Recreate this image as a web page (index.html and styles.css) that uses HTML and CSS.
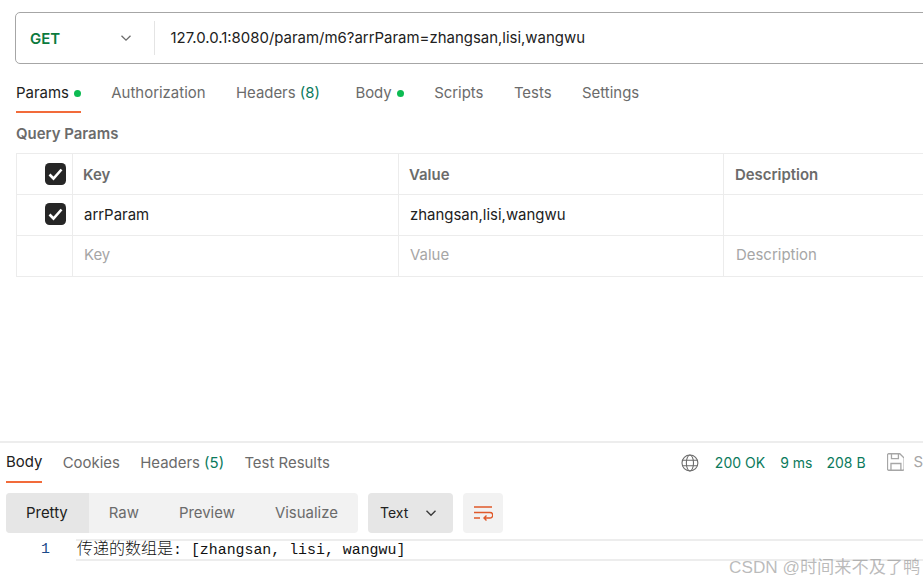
FILE: index.html
```html
<!DOCTYPE html>
<html lang="zh">
<head>
<meta charset="utf-8">
<title>Postman</title>
<link rel="stylesheet" href="styles.css">
</head>
<body>
<main class="page">
  <section class="request">
    <div class="urlbar">
      <div class="method"><span class="get">GET</span>
        <svg class="chev" width="12" height="12" viewBox="0 0 12 12"><path d="M1.500 3.800 6 8.200l4.500-4.400" fill="none" stroke="#6b6b6b" stroke-width="1.300"/></svg>
      </div>
      <div class="url">127.0.0.1:8080/param/m6?arrParam=zhangsan,lisi,wangwu</div>
    </div>
    <nav class="tabs reqtabs">
      <span class="tab active">Params<i class="dot"></i></span>
      <span class="tab">Authorization</span>
      <span class="tab wide">Headers <em>(8)</em></span>
      <span class="tab">Body<i class="dot"></i></span>
      <span class="tab">Scripts</span>
      <span class="tab">Tests</span>
      <span class="tab">Settings</span>
    </nav>
    <h2 class="qp">Query Params</h2>
    <div class="table">
      <div class="cell chk"><svg class="box" width="21" height="22" viewBox="0 0 21 22"><rect width="21" height="22" rx="4.500" fill="#262626"/><path d="M4.500 11.500 8.500 15.500l8-9" fill="none" stroke="#fff" stroke-width="2.600"/></svg></div>
      <div class="cell head">Key</div>
      <div class="cell head">Value</div>
      <div class="cell head desc">Description</div>

      <div class="cell chk up"><svg class="box" width="21" height="22" viewBox="0 0 21 22"><rect width="21" height="22" rx="4.500" fill="#262626"/><path d="M4.500 11.500 8.500 15.500l8-9" fill="none" stroke="#fff" stroke-width="2.600"/></svg></div>
      <div class="cell val">arrParam</div>
      <div class="cell val">zhangsan,lisi,wangwu</div>
      <div class="cell val"></div>

      <div class="cell chk"></div>
      <div class="cell ph">Key</div>
      <div class="cell ph">Value</div>
      <div class="cell ph desc">Description</div>
    </div>
  </section>

  <section class="response">
    <div class="resphead">
      <nav class="tabs resptabs">
        <span class="tab active">Body</span>
        <span class="tab">Cookies</span>
        <span class="tab">Headers <em>(5)</em></span>
        <span class="tab">Test Results</span>
      </nav>
      <div class="status">
        <svg class="globe" width="18" height="18" viewBox="0 0 18 18" fill="none" stroke="#6b6b6b" stroke-width="1.100"><circle cx="9" cy="9" r="8"/><ellipse cx="9" cy="9" rx="3.600" ry="8"/><path d="M1.600 6.200h14.800M1.600 11.800h14.800"/></svg>
        <span class="ok">200 OK</span>
        <span class="ok">9 ms</span>
        <span class="ok">208 B</span>
        <svg class="save" width="18" height="18" viewBox="0 0 18 18" fill="none" stroke="#a6a6a6" stroke-width="1.300"><path d="M1.700.7h11.200l4.400 4.400v11a1.200 1.200 0 0 1-1.200 1.200H1.700A1.200 1.200 0 0 1 .5 16.100V1.900A1.200 1.200 0 0 1 1.700.7z"/><path d="M4.500.7v4.800h7V.7M4 17.300v-6.800h10v6.800"/></svg>
        <span class="savetext">S</span>
      </div>
    </div>
    <div class="toolbar">
      <div class="segments">
        <span class="seg on">Pretty</span>
        <span class="seg">Raw</span>
        <span class="seg">Preview</span>
        <span class="seg">Visualize</span>
      </div>
      <div class="format"><span class="fmt">Text</span>
        <svg width="12" height="12" viewBox="0 0 12 12"><path d="M1.500 3.800 6 8.200l4.500-4.400" fill="none" stroke="#3a3a3a" stroke-width="1.400"/></svg>
      </div>
      <div class="wrap">
        <svg width="20" height="16" viewBox="0 0 20 16" fill="none" stroke="#e0592a" stroke-width="1.400"><path d="M1 2h18M1 7.500h16a2.500 2.500 0 0 1 0 5.500h-6M13.500 10.500 11 13l2.500 2.500M1 13h6"/></svg>
      </div>
    </div>
    <div class="code">
      <span class="ln">1</span>
      <div class="line"><span class="cjk">传递的数组是</span>: [zhangsan, lisi, wangwu]</div>
    </div>
  </section>
</main>
<div class="mark">CSDN @时间来不及了鸭</div>
</body>
</html>
```
FILE: styles.css
```css
* { box-sizing: border-box; }
html, body { margin: 0; padding: 0; }
body {
  width: 923px;
  height: 583px;
  overflow: hidden;
  background: #fff;
  font-family: Inter, "Noto Sans CJK SC", sans-serif;
  font-size: 14.950px;
  color: #212121;
  position: relative;
}
.page { display: flex; flex-direction: column; height: 583px; }
.request { padding: 12px 0 0 15px; height: 441px; flex: none; }

.urlbar {
  width: 930px;
  height: 52px;
  border: 1px solid #a6a6a6;
  border-radius: 5px;
  display: flex;
  align-items: center;
}
.method {
  width: 139px;
  height: 34px;
  padding: 0 22px 0 14px;
  border-right: 1px solid #e4e4e4;
  display: flex;
  align-items: center;
  justify-content: space-between;
  flex: none;
}
.get { color: #0b7a3e; font-weight: 600; margin-top: 2px; }
.url { padding-left: 15.500px; white-space: nowrap; }

.tabs { display: flex; color: #6b6b6b; }
.tab { display: flex; align-items: center; white-space: pre; border-bottom: 1px solid transparent; }
.tab em { font-style: normal; color: #0b7a5c; }
.tab.active { color: #212121; border-bottom: 2px solid #f26b3a; }
.tab.wide { margin-right: 5px; }
.dot { width: 7px; height: 7px; border-radius: 50%; background: #0cbb52; margin-left: 5px; margin-top: 1px; }

.reqtabs { margin: 14px 0 0 1px; gap: 30.400px; height: 35px; }
.reqtabs .tab { height: 35px; padding-bottom: 5px; }
.reqtabs .tab.active { padding-bottom: 3px; }
.qp { margin: 12px 0 0 1px; height: 18px; line-height: 18px; font-size: 14.950px; font-weight: 600; color: #6b6b6b; }

.table {
  margin: 10px 0 0 1px;
  width: 930px;
  display: grid;
  grid-template-columns: 56px 326px 325px 1fr;
  grid-auto-rows: 41px;
  border-top: 1px solid #ececec;
  border-left: 1px solid #ececec;
}
.cell {
  border-right: 1px solid #ececec;
  border-bottom: 1px solid #ececec;
  display: flex;
  align-items: center;
  padding-left: 11px;
}
.chk { padding-left: 28px; }
.chk.up { padding-bottom: 3px; }
.box { display: block; }
.head { font-weight: 600; color: #6b6b6b; padding-left: 10px; padding-top: 2px; }
.head.desc { padding-left: 11px; }
.val { color: #212121; }
.ph { color: #a6a6a6; padding-bottom: 3px; }
.ph.desc { padding-left: 12px; }

.response { border-top: 2px solid #ededed; flex: 1; position: relative; }
.resphead { display: flex; justify-content: space-between; height: 40px; padding-left: 6px; }
.resptabs { gap: 20.300px; }
.resptabs .tab { height: 40px; }
.status { display: flex; align-items: center; padding-bottom: 2px; white-space: nowrap; width: 242px; flex: none; }
.globe { margin-right: 16px; margin-top: 2px; }
.ok { color: #0b7a5c; margin-right: 15px; font-size: 14px; }
.ok:nth-of-type(2) { margin-right: 14px; }
.ok:nth-of-type(3) { margin-right: 21px; }
.save { margin-bottom: 1px; margin-right: 9px; }
.savetext { color: #a6a6a6; }

.toolbar { display: flex; gap: 10px; margin-top: 10px; padding-left: 6px; height: 40px; }
.segments { display: flex; background: #f2f2f2; border-radius: 4px; overflow: hidden; width: 352px; color: #6b6b6b; }
.seg { display: flex; align-items: center; padding: 0 20px; }
.seg.on { background: #e6e6e6; color: #212121; padding-right: 21px; }
.format { width: 85px; background: #e6e6e6; border-radius: 4px; display: flex; align-items: center; justify-content: space-between; padding: 0 16px 0 12px; font-size: 14px; }
.fmt { margin-bottom: 2px; }
.wrap { width: 40px; background: #f2f2f2; border-radius: 4px; display: flex; align-items: center; justify-content: center; }

.code { display: flex; margin-top: 6px; font-family: "Liberation Mono", "Noto Sans CJK SC", monospace; font-size: 14.900px; }
.ln { width: 51px; height: 22px; line-height: 21px; text-align: right; color: #1a4a8a; padding-right: 1px; flex: none; }
.line {
  margin-left: 25px;
  flex: 1;
  height: 22px;
  line-height: 13px;
  border-top: 2px solid #ededed;
  border-bottom: 2px solid #ededed;
  color: #111;
  white-space: pre;
  padding-left: 1px;
}
.cjk { font-size: 16px; font-weight: 300; font-family: "Noto Sans CJK SC", sans-serif; }
.mark {
  position: absolute;
  left: 729px;
  top: 557px;
  font-size: 17.200px;
  line-height: 21px;
  color: rgba(120,120,120,.5);
  white-space: nowrap;
  font-family: "Liberation Sans", "Noto Sans CJK SC", sans-serif;
}
```
